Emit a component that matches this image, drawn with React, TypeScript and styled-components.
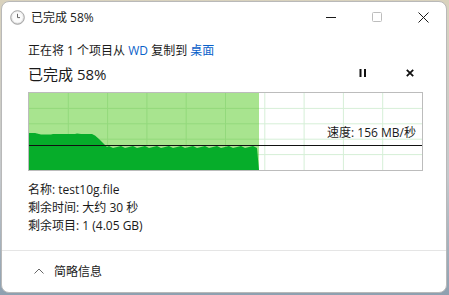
import React, { FC } from 'react';
import styled, { createGlobalStyle } from 'styled-components';

const GlobalStyle = createGlobalStyle`
  html, body {
    margin: 0;
    padding: 0;
    background: #cfcabd;
  }
  body {
    font-family: "Open Sans", "Noto Sans CJK SC", sans-serif;
  }
`;

const Frame = styled.div`
  width: 449px;
  height: 295px;
  padding: 1px 2px 2px 1px;
  box-sizing: border-box;
  background: linear-gradient(180deg, #d9d2bd 0%, #c4c8cc 60%, #8ea0b0 100%);
`;

const Window = styled.div`
  width: 446px;
  height: 292px;
  box-sizing: border-box;
  background: #fff;
  border: 1px solid #b9b9b9;
  border-radius: 8px;
  display: flex;
  flex-direction: column;
  overflow: hidden;
`;

const TitleBar = styled.div`
  height: 30px;
  display: flex;
  align-items: center;
  padding-left: 8px;
`;

const TitleText = styled.span`
  font-size: 12px;
  color: #1a1a1a;
  margin-left: 6px;
  flex: 1;
`;

const CaptionButton = styled.div`
  width: 46px;
  height: 30px;
  display: flex;
  align-items: center;
  justify-content: center;
`;

const Body = styled.div`
  flex: 1;
  padding: 10px 26px 0 26px;
  display: flex;
  flex-direction: column;
`;

const FromLine = styled.div`
  font-size: 12px;
  color: #1a1a1a;
  line-height: 17px;
`;

const Link = styled.span`
  color: #0a61c9;
`;

const StatusRow = styled.div`
  display: flex;
  align-items: center;
  margin-top: 3px;
  height: 22px;
`;

const StatusText = styled.span`
  font-size: 15px;
  color: #1a1a1a;
  flex: 1;
`;

const IconButton = styled.div<{ $gap?: number }>`
  width: 20px;
  height: 20px;
  display: flex;
  align-items: center;
  justify-content: center;
  margin-left: ${(p) => p.$gap ?? 0}px;
`;

const Chart = styled.div`
  position: relative;
  margin-top: 8px;
  width: 395px;
  height: 79px;
  box-sizing: border-box;
  border: 1px solid #bcbcbc;
`;

const SpeedLabel = styled.span`
  position: absolute;
  right: 6px;
  top: 33px;
  font-size: 12px;
  line-height: 14px;
  color: #1a1a1a;
`;

const Details = styled.div`
  margin-top: 10px;
  display: flex;
  flex-direction: column;
`;

const DetailLine = styled.div`
  font-size: 12px;
  line-height: 18px;
  color: #1a1a1a;
`;

const Footer = styled.div`
  height: 40px;
  border-top: 1px solid #e5e5e5;
  display: flex;
  align-items: center;
  padding-left: 32px;
  margin-bottom: 1px;
`;

const FooterText = styled.span`
  font-size: 12px;
  color: #1a1a1a;
  margin-left: 10px;
`;

const W = 393;
const H = 77;
const FILL = 230;

const wave = (() => {
  const pts: string[] = [];
  for (let x = 80; x <= FILL; x += 4) {
    const k = Math.floor(x / 4) % 3;
    const y = 53.5 + (k === 0 ? 1.6 : k === 1 ? 0.4 : -0.4);
    pts.push(`${x},${y.toFixed(1)}`);
  }
  return pts.join(' ');
})();

const greenPath = `0,${H} 0,40 6,40 12,41.5 22,41.5 24,41 36,41 46,41 48,40.5 52,41 63,41 66,42.5 70,46 74,50 78,54 ${wave} ${FILL},${H}`;

const ChartDrawing: FC = () => {
  const cols = Array.from({ length: 9 }, (_, i) => (i + 1) * (W / 10));
  const rows = Array.from({ length: 4 }, (_, i) => (i + 1) * (H / 5));
  return (
    <svg width={W} height={H} style={{ display: 'block' }}>
      <rect x={0} y={0} width={FILL} height={H} fill="#a8e48f" />
      {cols.map((x) => (
        <line key={`v${x}`} x1={x} y1={0} x2={x} y2={H} stroke={x < FILL ? '#93d97c' : '#d6efd7'} strokeWidth={1} />
      ))}
      {rows.map((y) => (
        <React.Fragment key={`h${y}`}>
          <line x1={0} y1={y} x2={FILL} y2={y} stroke="#93d97c" strokeWidth={1} />
          <line x1={FILL} y1={y} x2={W} y2={y} stroke="#d6efd7" strokeWidth={1} />
        </React.Fragment>
      ))}
      <polygon points={greenPath} fill="#06ad2a" />
      <line x1={0} y1={52.5} x2={W} y2={52.5} stroke="#111" strokeWidth={1} />
    </svg>
  );
};

const ClockIcon: FC = () => (
  <svg width="15" height="15" viewBox="0 0 15 15">
    <defs>
      <linearGradient id="cg" x1="0" y1="0" x2="0" y2="1">
        <stop offset="0" stopColor="#f4f4f4" />
        <stop offset="1" stopColor="#d6d6d6" />
      </linearGradient>
    </defs>
    <circle cx="7.5" cy="7.5" r="6.8" fill="url(#cg)" stroke="#9a9a9a" strokeWidth="0.9" />
    <circle cx="7.5" cy="7.5" r="5.2" fill="#fbfbfb" />
    <path d="M7.5 3.8 V7.6 H10" stroke="#666" strokeWidth="1" fill="none" />
  </svg>
);

export const App: FC = () => {
  return (
    <>
      <GlobalStyle />
      <Frame>
        <Window>
          <TitleBar>
            <ClockIcon />
            <TitleText>已完成 58%</TitleText>
            <CaptionButton>
              <svg width="10" height="10" viewBox="0 0 10 10">
                <line x1="0" y1="5.5" x2="10" y2="5.5" stroke="#1a1a1a" strokeWidth="1" />
              </svg>
            </CaptionButton>
            <CaptionButton>
              <svg width="10" height="10" viewBox="0 0 10 10">
                <rect x="0.5" y="0.5" width="9" height="9" rx="1" fill="none" stroke="#bdbdbd" strokeWidth="1" />
              </svg>
            </CaptionButton>
            <CaptionButton>
              <svg width="11" height="11" viewBox="0 0 11 11">
                <path d="M0.5 0.5 L10.5 10.5 M10.5 0.5 L0.5 10.5" stroke="#1a1a1a" strokeWidth="1" />
              </svg>
            </CaptionButton>
          </TitleBar>
          <Body>
            <FromLine>
              正在将 1 个项目从 <Link>WD</Link> 复制到 <Link>桌面</Link>
            </FromLine>
            <StatusRow>
              <StatusText>已完成 58%</StatusText>
              <IconButton>
                <svg width="8" height="8" viewBox="0 0 8 8">
                  <rect x="0.5" y="0" width="2" height="8" fill="#111" />
                  <rect x="5" y="0" width="2" height="8" fill="#111" />
                </svg>
              </IconButton>
              <IconButton $gap={27}>
                <svg width="8" height="8" viewBox="0 0 8 8">
                  <path d="M0.8 0.8 L7.2 7.2 M7.2 0.8 L0.8 7.2" stroke="#111" strokeWidth="1.8" />
                </svg>
              </IconButton>
            </StatusRow>
            <Chart>
              <ChartDrawing />
              <SpeedLabel>速度: 156 MB/秒</SpeedLabel>
            </Chart>
            <Details>
              <DetailLine>名称: test10g.file</DetailLine>
              <DetailLine>剩余时间: 大约 30 秒</DetailLine>
              <DetailLine>剩余项目: 1 (4.05 GB)</DetailLine>
            </Details>
          </Body>
          <Footer>
            <svg width="10" height="6" viewBox="0 0 10 6">
              <path d="M0.5 5.5 L5 1 L9.5 5.5" stroke="#666" strokeWidth="1" fill="none" />
            </svg>
            <FooterText>简略信息</FooterText>
          </Footer>
        </Window>
      </Frame>
    </>
  );
};

export default App;
